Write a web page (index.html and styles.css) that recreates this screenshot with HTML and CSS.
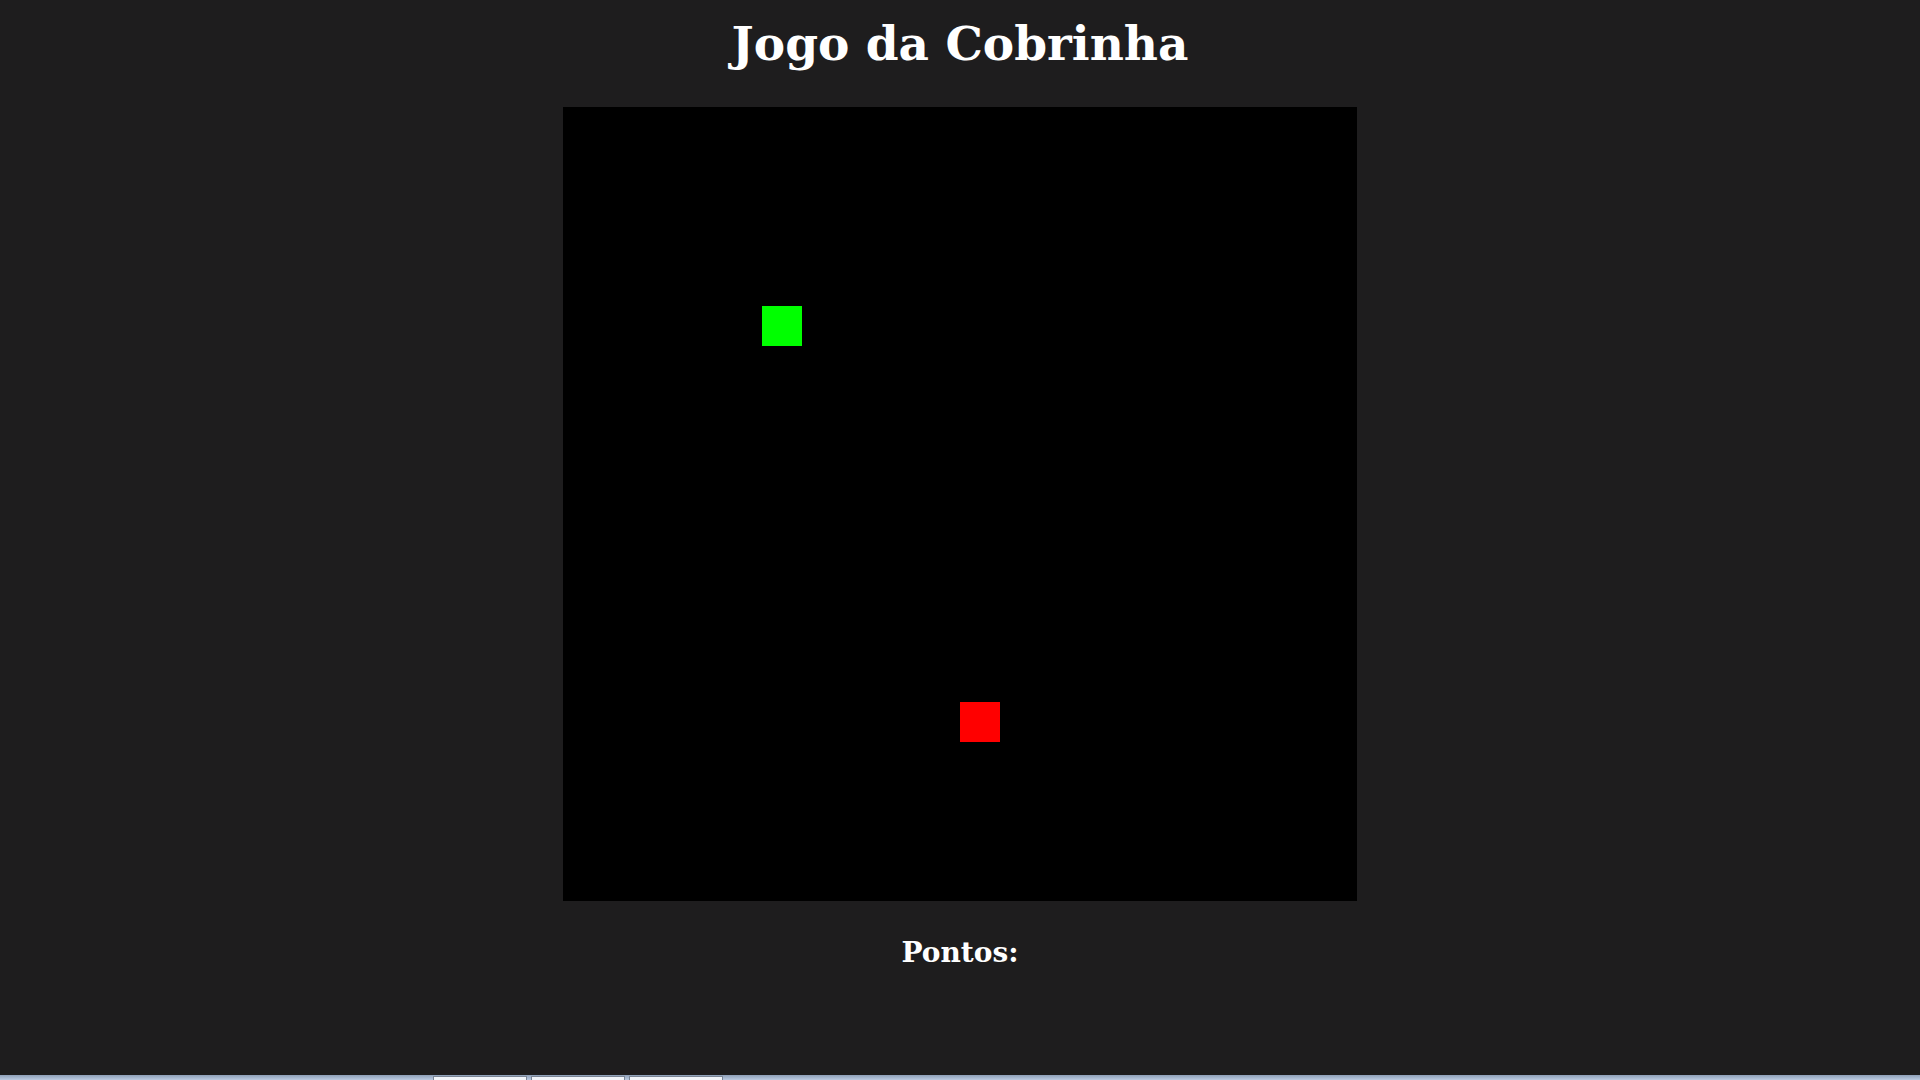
FILE: index.html
```html
<!DOCTYPE html>
<html lang="pt">
<head>
<meta charset="utf-8">
<title>Jogo da Cobrinha</title>
<link rel="stylesheet" href="styles.css">
</head>
<body>
<main class="game">
  <h1 class="title">Jogo da Cobrinha</h1>
  <div class="board">
    <div class="cell snake" style="left:199px;top:199px"></div>
    <div class="cell food" style="left:397px;top:595px"></div>
  </div>
  <p class="score">Pontos:</p>
</main>
<div class="taskbar">
  <span class="tab"></span><span class="tab"></span><span class="tab"></span>
</div>
</body>
</html>
```
FILE: styles.css
```css
html, body {
  margin: 0;
  padding: 0;
  height: 100%;
  background: #1e1d1e;
  overflow: hidden;
}
body {
  font-family: "DejaVu Serif", Georgia, serif;
  color: #ffffff;
}
.game {
  display: flex;
  flex-direction: column;
  align-items: center;
}
.title {
  margin: 14px 0 0 0;
  font-size: 47px;
  line-height: 60px;
  font-weight: bold;
}
.board {
  position: relative;
  width: 794px;
  height: 794px;
  margin-top: 33px;
  background: #000000;
}
.cell {
  position: absolute;
  width: 40px;
  height: 40px;
}
.snake { background: #00ff00; }
.food { background: #ff0000; }
.score {
  margin: 36px 0 0 0;
  font-size: 28px;
  line-height: 32px;
  font-weight: bold;
}
.taskbar {
  position: absolute;
  left: 0;
  right: 0;
  bottom: 0;
  height: 5px;
  background: linear-gradient(#8ea0b8, #bccbe2);
  display: flex;
  gap: 4px;
  padding-left: 433px;
  box-sizing: border-box;
}
.tab {
  width: 94px;
  height: 4px;
  margin-top: 1px;
  background: #f2f5fa;
  border: 1px solid #7a8596;
  border-bottom: none;
  box-sizing: border-box;
}
```
